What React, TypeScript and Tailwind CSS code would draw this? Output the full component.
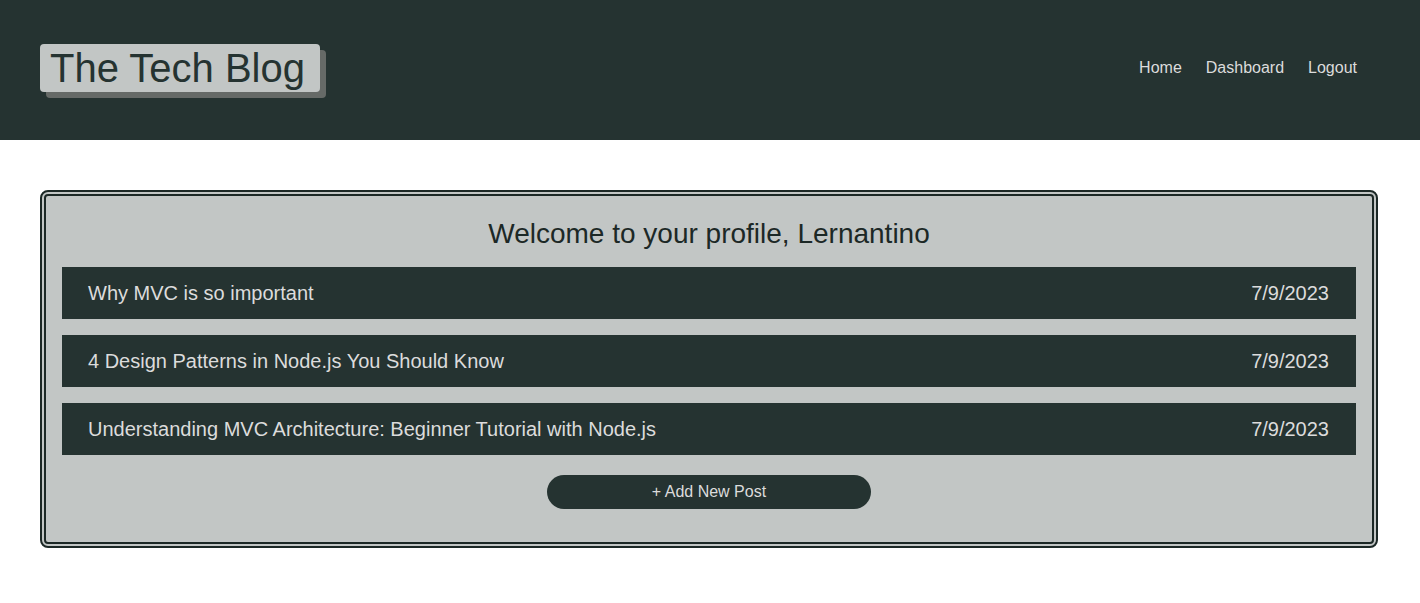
const posts = [
  { title: "Why MVC is so important", date: "7/9/2023" },
  { title: "4 Design Patterns in Node.js You Should Know", date: "7/9/2023" },
  { title: "Understanding MVC Architecture: Beginner Tutorial with Node.js", date: "7/9/2023" },
];

export default function App() {
  return (
    <div className="min-h-screen bg-white font-['Liberation_Sans',Arial,sans-serif]">
      <header className="h-[140px] bg-[#253331] flex items-center justify-between pl-10 pr-[63px]">
        <h1 className="h-12 w-[280px] mt-[-4px] flex items-center pl-[10px] rounded bg-[#c2c6c5] text-[#253331] text-[40px] leading-none shadow-[6px_6px_0_#666a67]">
          The Tech Blog
        </h1>
        <nav className="flex gap-6 text-base text-[#dcdcdc] -mt-[4px]">
          <a href="#">Home</a>
          <a href="#">Dashboard</a>
          <a href="#">Logout</a>
        </nav>
      </header>

      <main className="pl-10 pr-[42px] pt-[50px]">
        <section className="border-[6px] border-double border-[#1c2826] rounded-lg bg-[#c2c6c5] px-4 pt-[22px] pb-[33px]">
          <h2 className="text-center text-[28px] leading-8 text-[#1c2826] mb-[17px]">
            Welcome to your profile, Lernantino
          </h2>
          <div className="flex flex-col gap-4">
            {posts.map((post, i) => (
              <div
                key={i}
                className="h-[52px] bg-[#253331] text-[#dcdcdc] text-xl flex items-center justify-between pl-[26px] pr-[27px]"
              >
                <span>{post.title}</span>
                <span>{post.date}</span>
              </div>
            ))}
          </div>
          <div className="flex justify-center mt-5">
            <button className="w-[324px] h-[34px] rounded-full bg-[#253331] text-[#dcdcdc] text-base">
              + Add New Post
            </button>
          </div>
        </section>
      </main>
    </div>
  );
}
